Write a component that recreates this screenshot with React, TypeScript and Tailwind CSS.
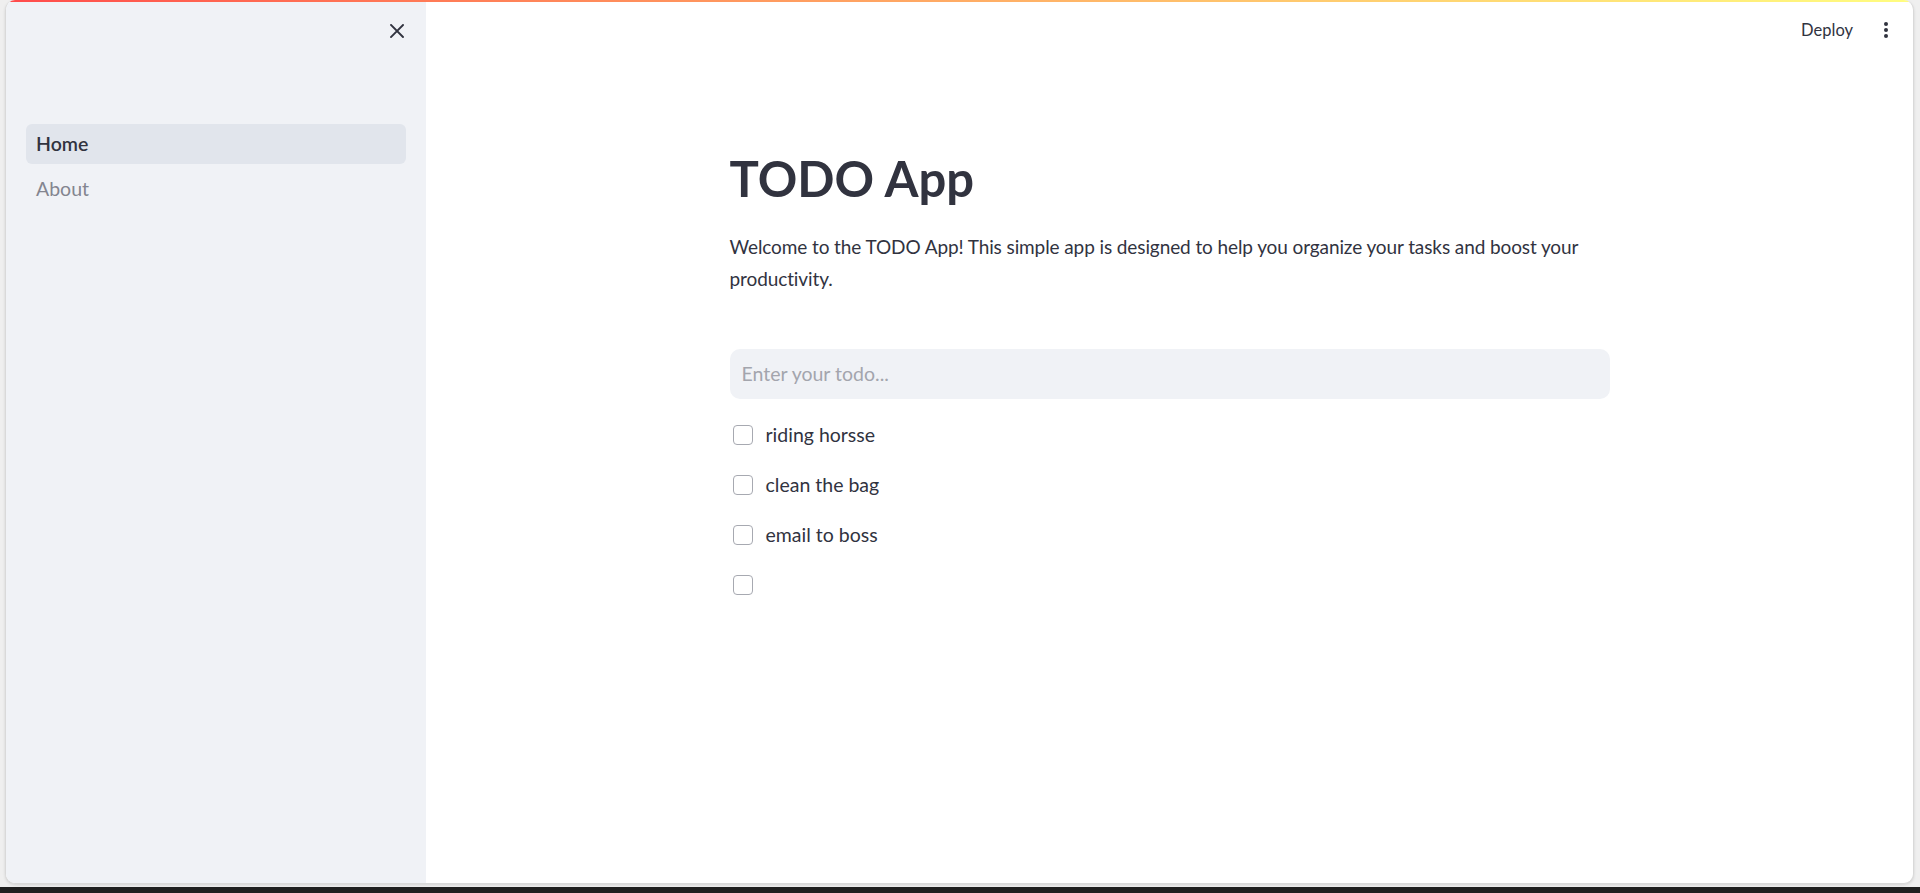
import React from "react";

const font = { fontFamily: "Lato, 'Noto Sans', sans-serif" };

function Checkbox({ label }: { label: string }) {
  return (
    <div className="flex h-[50px] items-center">
      <div className="ml-[3px] h-[20px] w-[20px] rounded-[4px] border border-[#a7a9b1] bg-white" />
      <span className="ml-[13px] text-[19.5px] leading-[32px] text-[#31333f]">{label}</span>
    </div>
  );
}

export default function App() {
  return (
    <div className="flex h-[893px] w-[1920px] flex-col bg-[#efefef]" style={font}>
      <div className="ml-[5px] mr-[6px] flex h-[884px] flex-col overflow-hidden rounded-[10px] border-x border-b border-[#d9d9d9] bg-white shadow-[0_1px_3px_rgba(0,0,0,0.12)]">
        <div className="h-[2px] w-full shrink-0 bg-gradient-to-r from-[#ff4b4b] to-[#fffd80]" />
        <div className="flex flex-1">
          {/* Sidebar */}
          <aside className="flex w-[420px] shrink-0 flex-col bg-[#f0f2f6]">
            <div className="flex justify-end pr-[22px] pt-[22px]">
              <svg width="14" height="14" viewBox="0 0 14 14">
                <path d="M1 1 L13 13 M13 1 L1 13" stroke="#31333f" strokeWidth="1.9" strokeLinecap="square" />
              </svg>
            </div>
            <nav className="mt-[86px] flex flex-col gap-[5px] px-[20px]">
              <div className="flex h-[40px] items-center rounded-[6px] bg-[#e1e5ec] pl-[10px] text-[19.5px] font-semibold text-[#31333f]">
                Home
              </div>
              <div className="flex h-[40px] items-center pl-[10px] text-[19.5px] text-[#83858f]">About</div>
            </nav>
          </aside>
          {/* Main */}
          <main className="flex flex-1 flex-col">
            <header className="flex h-[56px] items-center justify-end pr-[25px]">
              <span className="text-[16.5px] text-[#31333f]">Deploy</span>
              <svg className="ml-[31px]" width="4" height="16" viewBox="0 0 4 16">
                <circle cx="2" cy="2" r="2" fill="#31333f" />
                <circle cx="2" cy="8" r="2" fill="#31333f" />
                <circle cx="2" cy="14" r="2" fill="#31333f" />
              </svg>
            </header>
            <div className="mx-auto mt-[91px] flex w-[880px] flex-col">
              <h1 className="text-[49px] font-bold leading-[1.2] text-[#31333f]">TODO App</h1>
              <p className="mt-[23px] text-[19px] leading-[32px] tracking-[-0.1px] text-[#31333f]">
                Welcome to the TODO App! This simple app is designed to help you organize your tasks and boost your productivity.
              </p>
              <div className="mt-[54px] flex h-[50px] items-center rounded-[10px] bg-[#f0f2f6] pl-[12px] text-[19.5px] text-[#a3a5ad]">
                Enter your todo...
              </div>
              <div className="mt-[11px] flex flex-col">
                <Checkbox label="riding horsse" />
                <Checkbox label="clean the bag" />
                <Checkbox label="email to boss" />
                <Checkbox label="" />
              </div>
            </div>
          </main>
        </div>
      </div>
      <div className="mt-auto h-[6px] w-full bg-[#1f1f1f]" />
    </div>
  );
}
